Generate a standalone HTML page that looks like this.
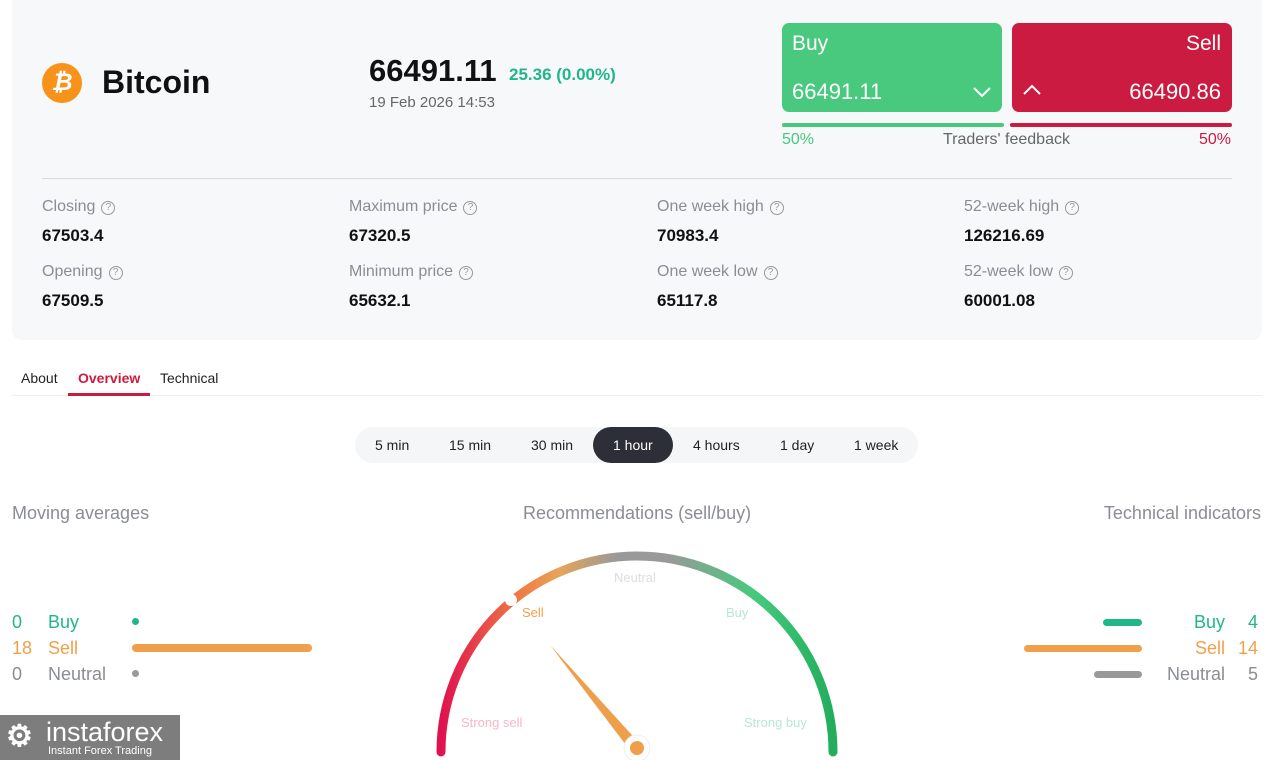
<!DOCTYPE html>
<html><head><meta charset="utf-8"><style>
*{margin:0;padding:0;box-sizing:border-box}
body{width:1266px;height:760px;overflow:hidden;background:#fff;font-family:"Liberation Sans",Arial,sans-serif;position:relative;color:#111}
.a{position:absolute;white-space:nowrap}
.card{position:absolute;left:12px;top:0;width:1250px;height:340px;background:#f7f8fa;border-radius:0 0 10px 10px}
.lbl{color:#8a8d93;font-size:16px}
.val{font-weight:bold;font-size:17px;color:#111}
.q{display:inline-block;width:14px;height:14px;border:1.3px solid #999;border-radius:50%;font-size:10px;line-height:12px;text-align:center;color:#999;margin-left:6px;vertical-align:1px}
.tf{font-size:14px;color:#222}
</style></head><body>
<div class="card"></div>
<div class="a" style="left:42px;top:63px;width:40px;height:40px;border-radius:50%;background:#f7931a;color:#fff;font-weight:bold;font-size:24px;text-align:center;line-height:40px;font-style:italic">₿</div>
<div class="a" style="left:102px;top:64px;font-size:32px;font-weight:bold">Bitcoin</div>
<div class="a" style="left:369px;top:53px;font-size:31px;font-weight:bold">66491.11</div>
<div class="a" style="left:509px;top:65px;font-size:17px;font-weight:bold;color:#21b68a">25.36 (0.00%)</div>
<div class="a" style="left:369px;top:94px;font-size:15px;color:#666">19 Feb 2026 14:53</div>
<div class="a" style="left:782px;top:23px;width:220px;height:89px;background:#48c97d;border-radius:7px;color:#fff">
 <div class="a" style="left:10px;top:9px;font-size:21px">Buy</div>
 <div class="a" style="left:10px;top:56px;font-size:22px">66491.11</div>
 <svg class="a" style="left:190px;top:62px" width="20" height="14"><path d="M2 3l8 8 8-8" stroke="#fff" stroke-width="2" fill="none"/></svg>
</div>
<div class="a" style="left:1012px;top:23px;width:220px;height:89px;background:#cc1b41;border-radius:7px;color:#fff">
 <div class="a" style="right:11px;top:9px;font-size:21px">Sell</div>
 <div class="a" style="right:11px;top:56px;font-size:22px">66490.86</div>
 <svg class="a" style="left:10px;top:60px" width="20" height="14"><path d="M2 11l8-8 8 8" stroke="#fff" stroke-width="2" fill="none"/></svg>
</div>
<div class="a" style="left:782px;top:123px;width:222px;height:4px;background:#48c97d;border-radius:2px"></div>
<div class="a" style="left:1010px;top:123px;width:222px;height:4px;background:#cc1b41;border-radius:2px"></div>
<div class="a" style="left:782px;top:131px;font-size:16px;color:#48c97d">50%</div>
<div class="a" style="left:943px;top:131px;font-size:16px;color:#666">Traders' feedback</div>
<div class="a" style="left:1199px;top:131px;font-size:16px;color:#cc1b41">50%</div>
<div class="a" style="left:42px;top:178px;width:1190px;height:1px;background:#d8dade"></div>

<div class="a lbl" style="left:42px;top:198px">Closing<span class="q">?</span></div>
<div class="a val" style="left:42px;top:226px">67503.4</div>
<div class="a lbl" style="left:42px;top:263px">Opening<span class="q">?</span></div>
<div class="a val" style="left:42px;top:291px">67509.5</div>
<div class="a lbl" style="left:349px;top:198px">Maximum price<span class="q">?</span></div>
<div class="a val" style="left:349px;top:226px">67320.5</div>
<div class="a lbl" style="left:349px;top:263px">Minimum price<span class="q">?</span></div>
<div class="a val" style="left:349px;top:291px">65632.1</div>
<div class="a lbl" style="left:657px;top:198px">One week high<span class="q">?</span></div>
<div class="a val" style="left:657px;top:226px">70983.4</div>
<div class="a lbl" style="left:657px;top:263px">One week low<span class="q">?</span></div>
<div class="a val" style="left:657px;top:291px">65117.8</div>
<div class="a lbl" style="left:964px;top:198px">52-week high<span class="q">?</span></div>
<div class="a val" style="left:964px;top:226px">126216.69</div>
<div class="a lbl" style="left:964px;top:263px">52-week low<span class="q">?</span></div>
<div class="a val" style="left:964px;top:291px">60001.08</div>

<div class="a tf" style="left:21px;top:370px">About</div>
<div class="a tf" style="left:78px;top:370px;color:#cc1b41;font-weight:bold">Overview</div>
<div class="a tf" style="left:160px;top:370px">Technical</div>
<div class="a" style="left:12px;top:395px;width:1250px;height:1px;background:#eceef2"></div>
<div class="a" style="left:68px;top:393px;width:82px;height:3px;background:#cc1b41"></div>

<div class="a" style="left:355px;top:427px;width:563px;height:36px;background:#f5f6f8;border-radius:18px"></div>
<div class="a" style="left:593px;top:427px;width:80px;height:36px;background:#2c2f38;border-radius:18px"></div>
<div class="a tf" style="left:375px;top:437px">5 min</div>
<div class="a tf" style="left:449px;top:437px">15 min</div>
<div class="a tf" style="left:531px;top:437px">30 min</div>
<div class="a tf" style="left:613px;top:437px;color:#fff">1 hour</div>
<div class="a tf" style="left:693px;top:437px">4 hours</div>
<div class="a tf" style="left:780px;top:437px">1 day</div>
<div class="a tf" style="left:854px;top:437px">1 week</div>

<div class="a" style="left:12px;top:503px;font-size:18px;color:#8a8d93">Moving averages</div>
<div class="a" style="left:523px;top:503px;font-size:18px;color:#8a8d93">Recommendations (sell/buy)</div>
<div class="a" style="right:5px;top:503px;font-size:18px;color:#8a8d93">Technical indicators</div>

<div class="a" style="left:12px;top:612px;font-size:18px;color:#21b68a">0</div>
<div class="a" style="left:48px;top:612px;font-size:18px;color:#21b68a">Buy</div>
<div class="a" style="left:132px;top:618px;width:7px;height:7px;border-radius:50%;background:#21b68a"></div>
<div class="a" style="left:12px;top:638px;font-size:18px;color:#f0a04b">18</div>
<div class="a" style="left:48px;top:638px;font-size:18px;color:#f0a04b">Sell</div>
<div class="a" style="left:132px;top:644px;width:180px;height:8px;border-radius:4px;background:#f0a04b"></div>
<div class="a" style="left:12px;top:664px;font-size:18px;color:#8a8d93">0</div>
<div class="a" style="left:48px;top:664px;font-size:18px;color:#8a8d93">Neutral</div>
<div class="a" style="left:132px;top:670px;width:7px;height:7px;border-radius:50%;background:#999"></div>

<div class="a" style="left:1103px;top:619px;width:39px;height:7px;border-radius:4px;background:#21b68a"></div>
<div class="a" style="right:41px;top:612px;font-size:18px;color:#21b68a">Buy</div>
<div class="a" style="right:8px;top:612px;font-size:18px;color:#21b68a">4</div>
<div class="a" style="left:1024px;top:645px;width:118px;height:7px;border-radius:4px;background:#f0a04b"></div>
<div class="a" style="right:41px;top:638px;font-size:18px;color:#f0a04b">Sell</div>
<div class="a" style="right:8px;top:638px;font-size:18px;color:#f0a04b">14</div>
<div class="a" style="left:1094px;top:671px;width:48px;height:7px;border-radius:4px;background:#999"></div>
<div class="a" style="right:41px;top:664px;font-size:18px;color:#8a8d93">Neutral</div>
<div class="a" style="right:8px;top:664px;font-size:18px;color:#8a8d93">5</div>

<svg class="a" style="left:0;top:0" width="1266" height="760">
<defs><linearGradient id="g" x1="441" y1="0" x2="833" y2="0" gradientUnits="userSpaceOnUse">
<stop offset="0" stop-color="#e0124f"/><stop offset="0.2" stop-color="#ef7a44"/><stop offset="0.3" stop-color="#e8a458"/><stop offset="0.45" stop-color="#999"/><stop offset="0.58" stop-color="#999"/><stop offset="0.8" stop-color="#46c97d"/><stop offset="1" stop-color="#22ad5c"/></linearGradient></defs>
<path d="M441 752A196 196 0 0 1 833 752" stroke="url(#g)" stroke-width="9" fill="none" stroke-linecap="round"/>
<circle cx="511" cy="600" r="6" fill="#fff"/>
<g font-family="Liberation Sans,Arial,sans-serif" font-size="13">
<text x="614" y="582" fill="#ddd">Neutral</text>
<text x="522" y="617" fill="#f0a04b">Sell</text>
<text x="726" y="617" fill="#b5e8d6">Buy</text>
<text x="461" y="727" fill="#f7b6c7">Strong sell</text>
<text x="744" y="727" fill="#b5e8d6">Strong buy</text>
</g>
<polygon points="550,645 641,745 632,753" fill="#ee9f4b"/>
<circle cx="637" cy="748" r="13" fill="#fff" stroke="#eee"/>
<circle cx="637" cy="748" r="7" fill="#ee9f4b"/>
</svg>

<div class="a" style="left:0;top:715px;width:180px;height:45px;background:#7d7d7d;color:#fff;overflow:hidden">
 <div class="a" style="left:6px;top:4px;font-size:30px;font-weight:bold">⚙</div>
 <div class="a" style="left:46px;top:2px;font-size:27px">instaforex</div>
 <div class="a" style="left:48px;top:30px;font-size:11px">Instant Forex Trading</div>
</div>
</body></html>
